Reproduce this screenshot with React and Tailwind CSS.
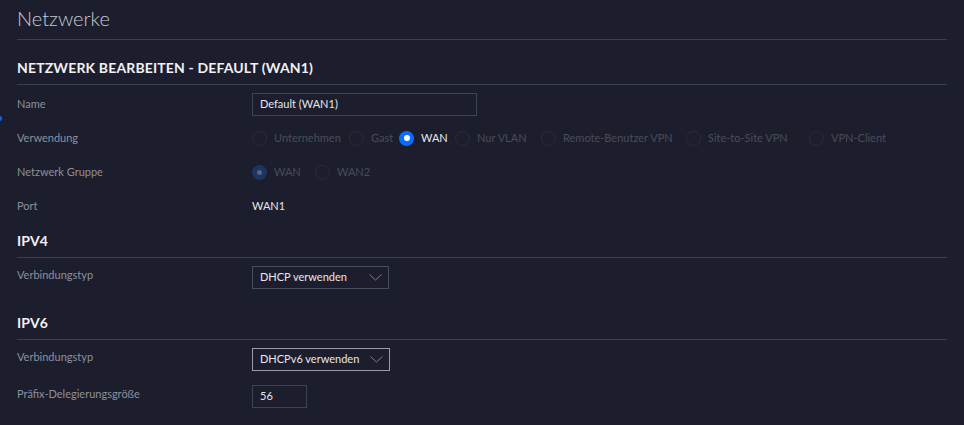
import React from "react";

function Radio({ state }) {
  if (state === "on") {
    return (
      <span className="w-[15px] h-[15px] rounded-full bg-[#0b6dff] flex items-center justify-center shrink-0">
        <span className="w-[6px] h-[6px] rounded-full bg-white" />
      </span>
    );
  }
  if (state === "dimon") {
    return (
      <span className="w-[15px] h-[15px] rounded-full bg-[#1b3665] flex items-center justify-center shrink-0">
        <span className="w-[5px] h-[5px] rounded-full bg-[#5a6378]" />
      </span>
    );
  }
  return <span className="w-[15px] h-[15px] rounded-full border border-[#2a2c3a] shrink-0" />;
}

function RadioItem({ label, state, w }) {
  const bright = state === "on";
  return (
    <div className={`flex items-center gap-[7px] ${w}`}>
      <Radio state={state} />
      <span className={bright ? "text-[#e8e8ee]" : "text-[#4a4c5b]"}>{label}</span>
    </div>
  );
}

function Chevron() {
  return (
    <svg width="13" height="7" viewBox="0 0 13 7" className="shrink-0">
      <path d="M0.5 0.5 L6.5 6 L12.5 0.5" fill="none" stroke="#7b7e89" strokeWidth="1" />
    </svg>
  );
}

function Label({ children, className = "" }) {
  return <div className={`w-[235px] shrink-0 text-[11px] text-[#8e909b] ${className}`}>{children}</div>;
}

export default function App() {
  return (
    <div
      className="relative w-[964px] h-[425px] overflow-hidden bg-[#1c1e2d] px-[17px] text-[11px]"
      style={{ fontFamily: "Lato, 'Open Sans', sans-serif" }}
    >
      <span className="absolute left-0 top-[116px] w-[2px] h-[5px] bg-[#1e5bd8] rounded-r" />
      <div className="h-[40px] border-b border-[#3d3f4d] flex items-center pb-[3px]">
        <h1 className="text-[20px] font-light text-[#c9cad3] leading-none">Netzwerke</h1>
      </div>
      <div className="pt-[20px] pb-[8px] border-b border-[#37434a]">
        <h2 className="text-[14px] font-bold text-[#f1f1f5] leading-[16px] tracking-[0.15px]">
          NETZWERK BEARBEITEN - DEFAULT (WAN1)
        </h2>
      </div>
      <div className="pt-[2px]">
        <div className="h-[34px] flex items-center">
          <Label>Name</Label>
          <div className="w-[225px] h-[23px] border border-[#3e4550] flex items-center px-[7px] text-[#e6e6ec]">
            Default (WAN1)
          </div>
        </div>
        <div className="h-[34px] flex items-center">
          <Label>Verwendung</Label>
          <div className="flex items-center">
            <RadioItem label="Unternehmen" w="w-[97px]" />
            <RadioItem label="Gast" w="w-[50px]" />
            <RadioItem label="WAN" state="on" w="w-[56px]" />
            <RadioItem label="Nur VLAN" w="w-[86px]" />
            <RadioItem label="Remote-Benutzer VPN" w="w-[145px]" />
            <RadioItem label="Site-to-Site VPN" w="w-[123px]" />
            <RadioItem label="VPN-Client" w="w-[100px]" />
          </div>
        </div>
        <div className="h-[34px] flex items-center">
          <Label>Netzwerk Gruppe</Label>
          <div className="flex items-center">
            <RadioItem label="WAN" state="dimon" w="w-[63px]" />
            <RadioItem label="WAN2" w="w-[60px]" />
          </div>
        </div>
        <div className="h-[34px] flex items-center">
          <Label>Port</Label>
          <div className="text-[#e6e6ec]">WAN1</div>
        </div>
      </div>
      <div className="pt-[10px] pb-[8px] border-b border-[#37434a]">
        <h2 className="text-[14px] font-bold text-[#f1f1f5] leading-[16px] tracking-[0.15px]">IPV4</h2>
      </div>
      <div className="pt-[8px] flex items-center">
        <Label className="mb-[5px]">Verbindungstyp</Label>
        <div className="w-[137px] h-[23px] border border-[#47505a] flex items-center justify-between pl-[7px] pr-[6px] text-[#e6e6ec]">
          <span>DHCP verwenden</span>
          <Chevron />
        </div>
      </div>
      <div className="pt-[26px] pb-[8px] border-b border-[#37434a]">
        <h2 className="text-[14px] font-bold text-[#f1f1f5] leading-[16px] tracking-[0.15px]">IPV6</h2>
      </div>
      <div className="pt-[8px] flex items-center">
        <Label className="mb-[5px]">Verbindungstyp</Label>
        <div className="w-[138px] h-[23px] border border-[#9a9ca6] flex items-center justify-between pl-[7px] pr-[6px] text-[#e6e6ec]">
          <span>DHCPv6 verwenden</span>
          <Chevron />
        </div>
      </div>
      <div className="pt-[14px] flex items-center">
        <Label className="mb-[5px]">Präfix-Delegierungsgröße</Label>
        <div className="w-[55px] h-[23px] border border-[#3e4550] flex items-center px-[7px] text-[#e6e6ec]">56</div>
      </div>
    </div>
  );
}
